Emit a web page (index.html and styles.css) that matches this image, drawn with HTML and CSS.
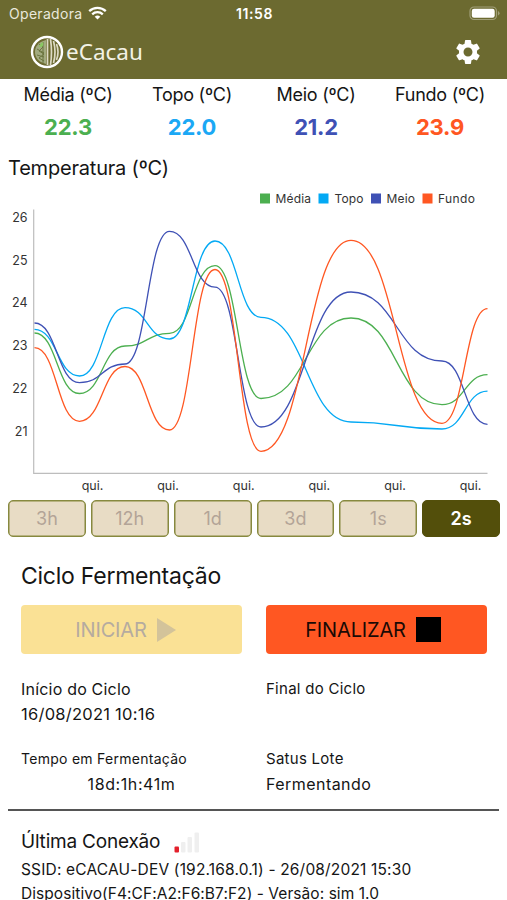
FILE: index.html
```html
<!DOCTYPE html>
<html lang="pt-BR">
<head>
    <meta charset="UTF-8">
    <meta name="viewport" content="width=device-width, initial-scale=1.0">
    <title>eCacau</title>
    <link rel="stylesheet" href="styles.css">
</head>
<body>

<header class="header">
    <div class="status-bar">
        <div class="carrier">
            <span>Operadora</span>
            <svg class="wifi" width="19" height="14" viewBox="0 0 19 14" fill="none" stroke="#fff" stroke-width="2.3">
                <path d="M1.2 5.2a12 12 0 0 1 16.6 0"/>
                <path d="M4.2 8.3a7.7 7.7 0 0 1 10.6 0"/>
                <path d="M9.5 13.6l-2.8-2.9a4.1 4.1 0 0 1 5.6 0z" fill="#fff" stroke="none"/>
            </svg>
        </div>
        <span class="clock">11:58</span>
        <svg class="battery" width="31" height="15" viewBox="0 0 31 15">
            <rect x="1" y="1" width="26.5" height="12.5" rx="4" fill="none" stroke="#a09e78" stroke-width="1.2"/>
            <rect x="2.8" y="2.8" width="22.9" height="8.9" rx="2.2" fill="#fff"/>
            <path d="M29 5v4.4q1.6-.7 1.6-2.2T29 5z" fill="#a09e78"/>
        </svg>
    </div>
    <div class="toolbar">
        <div class="logo">
            <svg width="34" height="34" viewBox="0 0 34 34">
                <circle cx="17" cy="17" r="15" fill="#6c6a30" stroke="#fff" stroke-width="2.4"/>
                <path d="M16 5C8 7 5 12 5 17s3 10 11 12z" fill="#a3ab80"/>
                <path d="M9 9l4 3-4 4 5 3-5 4 5 3M13 7v21M7 14l7 4M7 20l7 2" fill="none" stroke="#66703a" stroke-width="0.9"/>
                <path d="M9 12q1-4 4-5 1 3-1 5z" fill="#8ac763"/>
                <g fill="none" stroke="#dddac4" stroke-width="1.7">
                    <path d="M17.500 4v26"/>
                    <path d="M20.500 4q2 13 0 26"/>
                    <path d="M23.500 6q3 11 0 22"/>
                    <path d="M26.500 9q3 8 0 16"/>
                </g>
            </svg>
            <span class="logo-text">eCacau</span>
        </div>
        <svg class="gear" width="30" height="30" viewBox="0 0 24 24" fill="#fff">
            <path d="M19.140 12.940c.04-.3.060-.61.060-.94 0-.32-.02-.64-.070-.94l2.030-1.580a.49.49 0 0 0 .12-.61l-1.920-3.320a.488.488 0 0 0-.59-.22l-2.390.96c-.5-.38-1.030-.7-1.620-.94l-.36-2.540a.484.484 0 0 0-.48-.41h-3.840c-.24 0-.43.17-.47.41l-.36 2.540c-.59.24-1.130.57-1.620.94l-2.390-.96c-.22-.08-.47 0-.59.22L2.740 8.870c-.12.21-.08.47.12.61l2.030 1.580c-.05.3-.09.63-.09.94s.02.64.070.94l-2.030 1.580a.49.49 0 0 0-.12.61l1.920 3.320c.12.22.37.29.59.22l2.390-.96c.5.38 1.030.7 1.620.94l.36 2.540c.05.24.24.41.48.41h3.840c.24 0 .44-.17.47-.41l.36-2.540c.59-.24 1.130-.56 1.620-.94l2.390.96c.22.08.47 0 .59-.22l1.920-3.320c.12-.22.070-.47-.12-.61l-2.010-1.580zM12 15.600c-1.980 0-3.600-1.620-3.600-3.600s1.620-3.600 3.600-3.600 3.600 1.620 3.600 3.600-1.620 3.600-3.600 3.600z"/>
        </svg>
    </div>
</header>

<main>
    <section class="readings">
        <div class="reading media"><span>Média (ºC)</span><strong>22.3</strong></div>
        <div class="reading topo"><span>Topo (ºC)</span><strong>22.0</strong></div>
        <div class="reading meio"><span>Meio (ºC)</span><strong>21.2</strong></div>
        <div class="reading fundo"><span>Fundo (ºC)</span><strong>23.9</strong></div>
    </section>

    <section class="chart-section">
        <h2 class="chart-title">Temperatura (ºC)</h2>
        <svg class="chart" width="507" height="310" viewBox="0 187 507 310">
            <g class="legend">
                <rect x="260" y="193.500" width="10" height="10" fill="#4caf50"/>
                <text x="275.500" y="203" textLength="35.500">Média</text>
                <rect x="318.500" y="193.500" width="10" height="10" fill="#03a9f4"/>
                <text x="334.500" y="203" textLength="29">Topo</text>
                <rect x="371" y="193.500" width="10" height="10" fill="#3f51b5"/>
                <text x="386.500" y="203" textLength="28.500">Meio</text>
                <rect x="422.500" y="193.500" width="10" height="10" fill="#ff5722"/>
                <text x="438" y="203" textLength="37">Fundo</text>
            </g>
            <path class="axis" d="M33.700 209.500V473.300H487.500"/>
            <g class="y-labels">
                <text x="27.500" y="221.500">26</text>
                <text x="27.500" y="264.500">25</text>
                <text x="27.500" y="307">24</text>
                <text x="27.500" y="350">23</text>
                <text x="27.500" y="393">22</text>
                <text x="27.500" y="435.500">21</text>
            </g>
            <g class="x-labels">
                <text x="92.500" y="490">qui.</text>
                <text x="168" y="490">qui.</text>
                <text x="243.700" y="490">qui.</text>
                <text x="319.300" y="490">qui.</text>
                <text x="395" y="490">qui.</text>
                <text x="470.500" y="490">qui.</text>
            </g>
            <g class="lines" id="lines"></g>
        </svg>
    </section>

    <nav class="ranges">
        <button class="range">3h</button>
        <button class="range">12h</button>
        <button class="range">1d</button>
        <button class="range">3d</button>
        <button class="range">1s</button>
        <button class="range active">2s</button>
    </nav>

    <section class="cycle">
        <h2 class="cycle-title">Ciclo Fermentação</h2>
        <div class="actions">
            <button class="action start" disabled>
                <span>INICIAR</span>
                <svg width="19" height="24" viewBox="0 0 19 24"><path d="M0 0l19 12L0 24z" fill="#d3c39a"/></svg>
            </button>
            <button class="action stop">
                <span>FINALIZAR</span>
                <i class="square"></i>
            </button>
        </div>
        <div class="details">
            <div class="detail">
                <p class="label label-start">Início do Ciclo</p>
                <p class="value value-start">16/08/2021 10:16</p>
            </div>
            <div class="detail">
                <p class="label">Final do Ciclo</p>
            </div>
            <div class="detail">
                <p class="label label-time">Tempo em Fermentação</p>
                <p class="value elapsed">18d:1h:41m</p>
            </div>
            <div class="detail">
                <p class="label">Satus Lote</p>
                <p class="value value-status">Fermentando</p>
            </div>
        </div>
    </section>

    <section class="connection">
        <div class="connection-head">
            <h2 class="connection-title">Última Conexão</h2>
            <svg width="26" height="21" viewBox="0 0 26 21">
                <rect x="0.500" y="14.500" width="4.500" height="6" rx="1" fill="#e3202c"/>
                <rect x="7" y="10" width="4.500" height="10.500" rx="1" fill="#efefef"/>
                <rect x="13.500" y="5" width="4.500" height="15.500" rx="1" fill="#efefef"/>
                <rect x="20.500" y="0.500" width="4.500" height="20" rx="1" fill="#efefef"/>
            </svg>
        </div>
        <p class="info info-ssid">SSID: eCACAU-DEV (192.168.0.1) - 26/08/2021 15:30</p>
        <p class="info info-device">Dispositivo(F4:CF:A2:F6:B7:F2) - Versão: sim 1.0</p>
    </section>
</main>

<script src="chart.js"></script>
</body>
</html>
```

FILE: styles.css
```css
body {
    font-family: Inter, "Liberation Sans", sans-serif;
    margin: 0;
    height: 900px;
    overflow: hidden;
    background-color: #fff;
    color: #151515;
}
h2, p {
    margin: 0;
    font-weight: normal;
    white-space: nowrap;
}
button {
    font-family: inherit;
    padding: 0;
}
.header {
    height: 79px;
    background-color: #6c6a30;
    color: #fff;
}
.status-bar {
    display: grid;
    grid-template-columns: 1fr auto 1fr;
    align-items: center;
    height: 27px;
    padding: 0 7px 0 9px;
    font-size: 14px;
}
.carrier {
    display: flex;
    align-items: center;
    gap: 6px;
    color: #e9e8dc;
    letter-spacing: 0.3px;
}
.wifi {
    margin-top: -2px;
}
.clock {
    font-weight: 600;
    letter-spacing: 0.6px;
}
.battery {
    justify-self: end;
    margin-top: -1px;
}
.toolbar {
    display: flex;
    justify-content: space-between;
    align-items: center;
    height: 50px;
    padding: 0 24px 0 30px;
}
.logo {
    display: flex;
    align-items: center;
    gap: 2px;
}
.logo-text {
    font-family: "Noto Sans", sans-serif;
    font-size: 22.5px;
    line-height: 34px;
    color: #f3f2e6;
}
.readings {
    display: grid;
    grid-template-columns: repeat(4, 124px);
    padding-left: 6px;
    height: 68px;
}
.reading {
    display: flex;
    flex-direction: column;
    align-items: center;
    padding-top: 4px;
    font-size: 18px;
    line-height: 23px;
    letter-spacing: -0.25px;
}
.reading strong {
    margin-top: 8px;
    font-size: 22px;
    line-height: 26px;
    font-weight: 700;
}
.media strong { color: #4caf50; }
.topo strong { color: #1ba8f5; }
.meio strong { color: #3f51b5; }
.fundo strong { color: #ff5722; }
.chart-title {
    height: 32px;
    padding: 8px 0 0 8px;
    font-size: 20px;
    line-height: 26px;
    letter-spacing: -0.2px;
}
.chart {
    display: block;
    font-size: 12.5px;
    fill: #333;
}
.legend {
    font-size: 12px;
}
.axis {
    fill: none;
    stroke: #bdbdbd;
    stroke-width: 1.2;
}
.y-labels {
    text-anchor: end;
}
.x-labels {
    text-anchor: middle;
}
.lines {
    fill: none;
    stroke-width: 1.3;
}
.ranges {
    display: grid;
    grid-template-columns: repeat(6, 1fr);
    gap: 5px;
    margin-top: 3px;
    padding: 0 7px 0 8px;
}
.range {
    height: 37px;
    border: 1px solid #87893f;
    border-radius: 5px;
    box-shadow: inset 0 0 0 0.5px #87893f;
    background-color: #e8dcc5;
    color: #b3a497;
    font-size: 18px;
}
.range.active {
    border-color: #534f0b;
    box-shadow: none;
    background-color: #534f0b;
    color: #fff;
    font-weight: 600;
}
.cycle {
    height: 272px;
    margin: 0 8px;
    padding: 0 12px 0 13px;
    border-bottom: 2px solid #555;
}
.cycle-title {
    padding-top: 24px;
    font-size: 23px;
    line-height: 30px;
    letter-spacing: -0.25px;
}
.actions {
    display: grid;
    grid-template-columns: 1fr 1fr;
    gap: 24px;
    margin-top: 14px;
}
.action {
    display: flex;
    justify-content: center;
    align-items: center;
    gap: 10px;
    height: 49px;
    border: none;
    border-radius: 4px;
    font-size: 20px;
    letter-spacing: -0.15px;
}
.start {
    padding-right: 12px;
    background-color: #fae195;
    color: #b5aba0;
}
.stop {
    padding-right: 7px;
    background-color: #ff5722;
    color: #1a0a05;
}
.square {
    width: 25px;
    height: 25px;
    background-color: #000;
}
.details {
    display: grid;
    grid-template-columns: 1fr 1fr;
    grid-template-rows: 70px 60px;
    column-gap: 24px;
    margin-top: 22px;
}
.label {
    font-size: 15px;
    line-height: 26px;
    letter-spacing: 0.27px;
}
.label-start {
    font-size: 16px;
    letter-spacing: 0.2px;
}
.label-time {
    font-size: 14px;
}
.value {
    font-size: 16px;
    line-height: 25px;
    letter-spacing: 0.45px;
}
.value-start {
    font-size: 16.5px;
    letter-spacing: 0.25px;
}
.elapsed {
    line-height: 24px;
    text-align: center;
    letter-spacing: 0.6px;
}
.connection {
    padding: 18px 0 0 21px;
}
.connection-head {
    display: flex;
    align-items: center;
    gap: 14px;
    height: 26px;
}
.connection-title {
    font-size: 19px;
    line-height: 26px;
    letter-spacing: -0.2px;
}
.info {
    font-size: 15.5px;
    line-height: 24px;
    letter-spacing: 0.17px;
}
.info-ssid {
    margin-top: 3px;
}
.info-device {
    letter-spacing: 0.06px;
}
```

FILE: chart.js
```js
// x position of each sample
const xs = [34.5, 79.5, 125, 169.5, 215, 261, 351, 442, 487.5];

const series = [
    { color: "#4caf50", ys: [333, 393.5, 346, 333.3, 265.7, 398.5, 318, 404.7, 374.7] },
    { color: "#03a9f4", ys: [329.3, 376, 307.7, 339, 241, 317.3, 422, 429, 391.2] },
    { color: "#3f51b5", ys: [323, 382.7, 364, 231.3, 287.2, 427, 292, 361, 424.3] },
    { color: "#ff5722", ys: [347.7, 421.3, 366.5, 430, 269.5, 451.3, 240.3, 423.3, 308.6] }
];

// Smooth curve that is flat at every sample
function curve(ys) {
    let d = "M" + xs[0] + " " + ys[0];
    for (let i = 1; i < xs.length; i++) {
        const mid = (xs[i - 1] + xs[i]) / 2;
        d += "C" + mid + " " + ys[i - 1] + " " + mid + " " + ys[i] + " " + xs[i] + " " + ys[i];
    }
    return d;
}

const lines = document.getElementById("lines");
series.forEach(function (s) {
    const path = document.createElementNS("http://www.w3.org/2000/svg", "path");
    path.setAttribute("d", curve(s.ys));
    path.setAttribute("stroke", s.color);
    lines.appendChild(path);
});
```
